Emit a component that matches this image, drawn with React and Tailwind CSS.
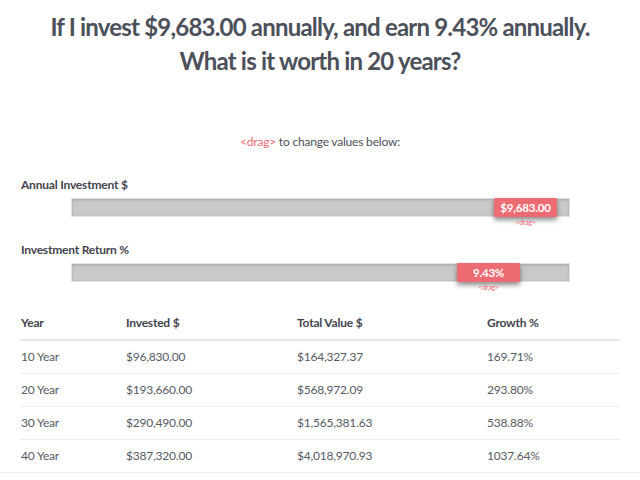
const rows = [
  { year: '10 Year', invested: '$96,830.00', total: '$164,327.37', growth: '169.71%' },
  { year: '20 Year', invested: '$193,660.00', total: '$568,972.09', growth: '293.80%' },
  { year: '30 Year', invested: '$290,490.00', total: '$1,565,381.63', growth: '538.88%' },
  { year: '40 Year', invested: '$387,320.00', total: '$4,018,970.93', growth: '1037.64%' },
];

function Slider({ label, value, left }) {
  return (
    <div className="mb-[24px]">
      <div className="pl-[21px] text-[12px] font-bold tracking-[-0.2px] text-[#3f434c] h-[18px] leading-[18px]">{label}</div>
      <div className="relative ml-[71px] mt-[4px] w-[499px] h-[19px] bg-[#c9c9c9] border border-[#e2e2e2] shadow-[inset_0_1px_3px_rgba(0,0,0,0.18)]">
        <div
          className="absolute top-[-1px] w-[63px] h-[19px] bg-[#ee6b73] rounded-[1px] shadow-[0_3px_5px_rgba(0,0,0,0.45)] flex items-center justify-center text-white text-[11.5px] font-bold tracking-[-0.2px]"
          style={{ left }}
        >
          {value}
          <span className="absolute top-[21px] left-0 right-0 text-center text-[7px] font-normal leading-none text-[#ee6b73]">&lt;drag&gt;</span>
        </div>
      </div>
    </div>
  );
}

export default function App() {
  return (
    <div className="w-[640px] h-[480px] bg-white overflow-hidden font-['Lato','Open_Sans',sans-serif] text-[#4a4e58]">
      <h1 className="pt-[10px] text-center text-[24px] font-bold leading-[34px] tracking-[-0.8px] text-[#4b505b]">
        If I invest $9,683.00 annually, and earn 9.43% annually.
        <br />
        What is it worth in 20 years?
      </h1>
      <p className="mt-[56px] text-center text-[12px] leading-[16px] tracking-[-0.2px] text-[#4b505b]">
        <span className="text-[#ee6b73]">&lt;drag&gt;</span> to change values below:
      </p>
      <div className="mt-[26px]">
        <Slider label="Annual Investment $" value="$9,683.00" left="422px" />
        <Slider label="Investment Return %" value="9.43%" left="385px" />
      </div>
      <table className="mt-[0px] ml-[20px] w-[600px] text-[12px] tracking-[-0.2px] text-left border-collapse">
        <thead>
          <tr className="h-[34px] border-b-2 border-[#e3e6ec] font-bold text-[#3f434c]">
            <th className="pl-[1px] w-[106px] font-bold">Year</th>
            <th className="w-[171px] font-bold">Invested $</th>
            <th className="w-[190px] font-bold">Total Value $</th>
            <th className="font-bold">Growth %</th>
          </tr>
        </thead>
        <tbody className="text-[#555a63]">
          {rows.map((r, i) => (
            <tr key={r.year} className={`h-[33px] ${i < rows.length - 1 ? 'border-b border-[#eceef1]' : ''}`}>
              <td className="pl-[1px]">{r.year}</td>
              <td>{r.invested}</td>
              <td>{r.total}</td>
              <td>{r.growth}</td>
            </tr>
          ))}
        </tbody>
      </table>
      <div className="h-px bg-[#f6eeee]" />
    </div>
  );
}
